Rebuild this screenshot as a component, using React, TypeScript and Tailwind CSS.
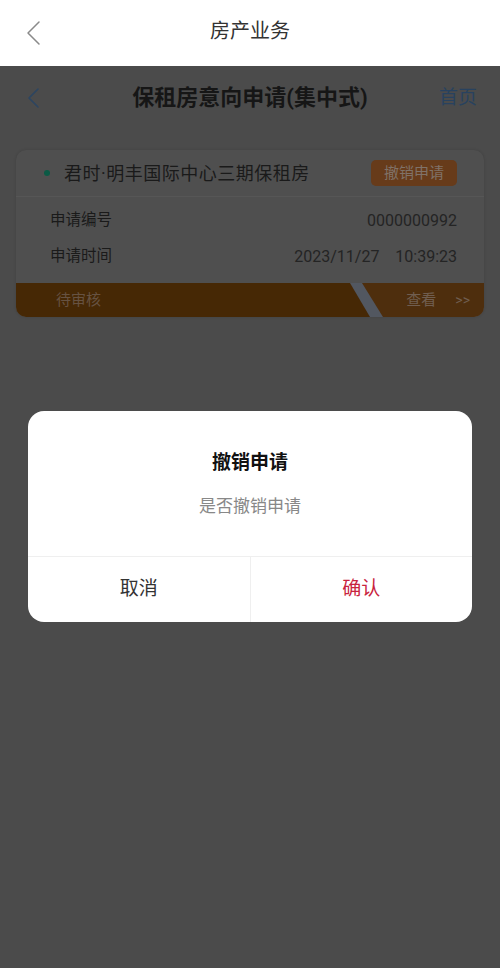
import React from "react";

const font = { fontFamily: 'Roboto, "Noto Sans CJK SC", "Noto Sans", sans-serif' };

export default function App() {
  return (
    <div
      className="relative w-full h-[968px] bg-[#4b4b4b] flex flex-col overflow-hidden"
      style={font}
    >
      {/* top white header */}
      <div className="h-[66px] bg-white flex items-center shrink-0">
        <div className="w-[80px] pl-[24px] flex items-center">
          <svg width="20" height="26" viewBox="0 0 20 26" fill="none">
            <path d="M15 2 L4 13 L15 24" stroke="#8a8a8a" strokeWidth="1.5" strokeLinecap="round" strokeLinejoin="round" />
          </svg>
        </div>
        <div className="flex-1 text-center text-[20px] text-[#333] leading-[26px] mb-[4px]">房产业务</div>
        <div className="w-[80px]" />
      </div>

      {/* inner nav */}
      <div className="h-[64px] flex items-center shrink-0">
        <div className="w-[80px] pl-[27px] flex items-center">
          <svg width="14" height="22" viewBox="0 0 14 22" fill="none">
            <path d="M11 2 L2 11 L11 20" stroke="#2c4561" strokeWidth="1.6" strokeLinecap="round" strokeLinejoin="round" />
          </svg>
        </div>
        <div className="flex-1 text-center text-[22px] font-bold text-[#161616] leading-[30px]">
          保租房意向申请(集中式)
        </div>
        <div className="w-[80px] pr-[23px] text-right text-[19px] text-[#28425f]">首页</div>
      </div>

      {/* card */}
      <div className="mx-[16px] mt-[20px] rounded-[10px] bg-[#4f4f4f] shadow-[0_0_3px_rgba(0,0,0,0.15)]">
        <div className="h-[46px] flex items-center pl-[28px] pr-[27px]">
          <div className="w-[6px] h-[6px] rounded-full bg-[#0b5a45]" />
          <div className="ml-[14px] flex-1 text-[18px] tracking-[0.5px] text-[#1a1a1a]">君时·明丰国际中心三期保租房</div>
          <div className="w-[86px] h-[26px] rounded-[5px] bg-[#673b1a] flex items-center justify-center text-[15px] text-[#807268]">
            撤销申请
          </div>
        </div>
        <div className="h-px bg-[#565656]" />
        <div className="pt-[6px] pb-[8px] pl-[34px] pr-[27px]">
          <div className="h-[36px] flex items-center justify-between">
            <span className="text-[15.5px] text-[#1a1a1a]">申请编号</span>
            <span className="text-[16px] text-[#242424]">0000000992</span>
          </div>
          <div className="h-[36px] flex items-center justify-between">
            <span className="text-[15.5px] text-[#1a1a1a]">申请时间</span>
            <span className="text-[16px] text-[#242424]">2023/11/27&nbsp;&nbsp;&nbsp;&nbsp;10:39:23</span>
          </div>
        </div>
        <div className="h-[34px] flex rounded-b-[10px] overflow-hidden bg-[#525760]">
          <div
            className="w-[354px] shrink-0 bg-[#462805] flex items-center pl-[40px] text-[15px] text-[#665242]"
            style={{ clipPath: "polygon(0 0, 334px 0, 354px 100%, 0 100%)" }}
          >
            待审核
          </div>
          <div
            className="ml-[-8px] flex-1 bg-[#4e2e0d] flex items-center justify-end pr-[14px] text-[15px] text-[#705e50]"
            style={{ clipPath: "polygon(0 0, 100% 0, 100% 100%, 21px 100%)" }}
          >
            <span className="mr-[19px]">查看</span>
            <span className="text-[14px]">&gt;&gt;</span>
          </div>
        </div>
      </div>

      {/* modal */}
      <div className="absolute left-[28px] top-[411px] w-[444px] h-[211px] bg-white rounded-[16px] flex flex-col overflow-hidden">
        <div className="pt-[39px] pb-[38px] flex flex-col items-center">
          <div className="text-[19px] leading-[26px] font-bold text-[#111]">撤销申请</div>
          <div className="mt-[18px] text-[17px] leading-[24px] text-[#888]">是否撤销申请</div>
        </div>
        <div className="h-px bg-[#efefef]" />
        <div className="flex-1 flex">
          <div className="flex-1 flex items-center justify-center text-[19px] text-[#333]">取消</div>
          <div className="w-px bg-[#efefef]" />
          <div className="flex-1 flex items-center justify-center text-[19px] text-[#c8233e]">确认</div>
        </div>
      </div>
    </div>
  );
}
